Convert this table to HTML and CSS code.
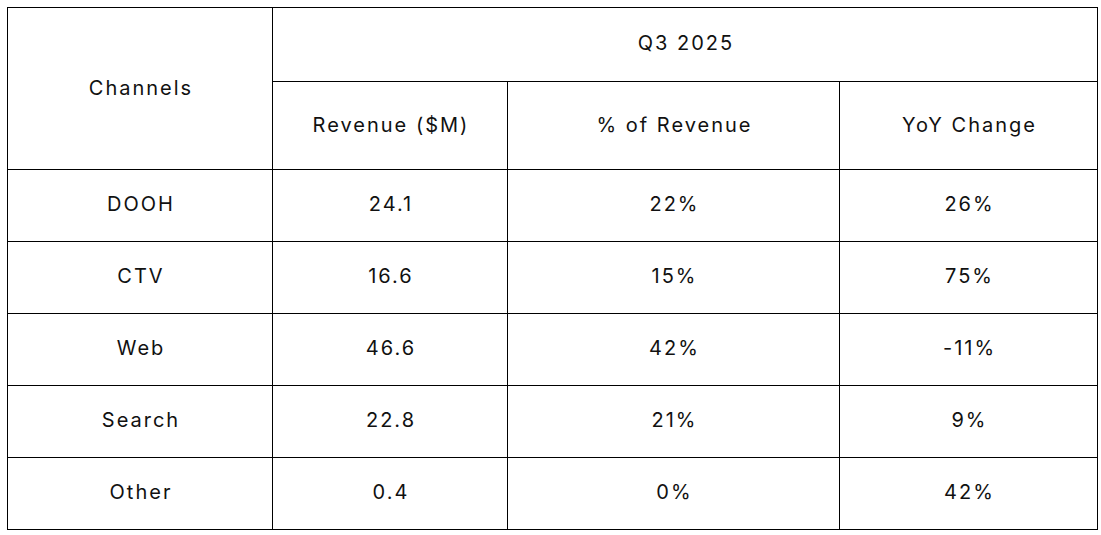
FILE: index.html
```html
<!DOCTYPE html>
<html lang="en">
<head>
<meta charset="utf-8">
<title>Channels Q3 2025</title>
<link rel="stylesheet" href="styles.css">
</head>
<body>
<div class="table">
  <div class="cell head channels">Channels</div>
  <div class="cell head quarter">Q3 2025</div>
  <div class="cell sub">Revenue ($M)</div>
  <div class="cell sub">% of Revenue</div>
  <div class="cell sub">YoY Change</div>

  <div class="cell">DOOH</div><div class="cell">24.1</div><div class="cell">22%</div><div class="cell">26%</div>
  <div class="cell">CTV</div><div class="cell">16.6</div><div class="cell">15%</div><div class="cell">75%</div>
  <div class="cell">Web</div><div class="cell">46.6</div><div class="cell">42%</div><div class="cell">-11%</div>
  <div class="cell">Search</div><div class="cell">22.8</div><div class="cell">21%</div><div class="cell">9%</div>
  <div class="cell">Other</div><div class="cell">0.4</div><div class="cell">0%</div><div class="cell">42%</div>
</div>
</body>
</html>
```
FILE: styles.css
```css
html, body {
  background: #ffffff;
}
body {
  margin: 7px 0 0 7px;
  font-family: "Inter", "Liberation Sans", sans-serif;
  font-size: 20px;
  letter-spacing: 2px;
  color: #111111;
}
.table {
  display: grid;
  grid-template-columns: 265px 235px 332px 258px;
  grid-template-rows: 74px 88px repeat(5, 72px);
  width: max-content;
  border-left: 1px solid #000;
  border-top: 1px solid #000;
}
.cell {
  box-sizing: border-box;
  border-right: 1px solid #000;
  border-bottom: 1px solid #000;
  display: flex;
  align-items: center;
  justify-content: center;
  text-align: center;
  line-height: 1;
  padding: 0 0 4px 2px;
}
.channels {
  grid-row: 1 / span 2;
  padding-bottom: 2px;
}
.quarter {
  grid-column: 2 / span 3;
  padding-bottom: 3px;
}
.sub {
  padding-bottom: 2px;
}
```
